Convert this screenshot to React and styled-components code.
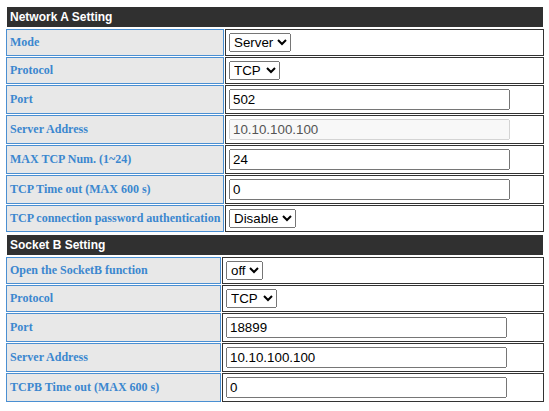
import styled, { createGlobalStyle } from 'styled-components';

const GlobalStyle = createGlobalStyle`
  body {
    margin: 0;
    background: #fff;
  }
`

const networkA = [
  { label: 'Mode', type: 'select', value: 'Server', options: ['Server', 'Client'] },
  { label: 'Protocol', type: 'select', value: 'TCP', options: ['TCP', 'UDP'] },
  { label: 'Port', type: 'input', value: '502' },
  { label: 'Server Address', type: 'input', value: '10.10.100.100', disabled: true },
  { label: 'MAX TCP Num. (1~24)', type: 'input', value: '24' },
  { label: 'TCP Time out (MAX 600 s)', type: 'input', value: '0' },
  { label: 'TCP connection password authentication', type: 'select', value: 'Disable', options: ['Disable', 'Enable'] },
]

const socketB = [
  { label: 'Open the SocketB function', type: 'select', value: 'off', options: ['off', 'on'] },
  { label: 'Protocol', type: 'select', value: 'TCP', options: ['TCP', 'UDP'] },
  { label: 'Port', type: 'input', value: '18899' },
  { label: 'Server Address', type: 'input', value: '10.10.100.100' },
  { label: 'TCPB Time out (MAX 600 s)', type: 'input', value: '0' },
]

function Field({ row }) {
  if (row.type === 'select') {
    return (
      <Select defaultValue={row.value}>
        {row.options.map(o => <option key={o}>{o}</option>)}
      </Select>
    )
  }
  return <Input type="text" defaultValue={row.value} disabled={row.disabled} />
}

function Section({ title, rows, labelWidth }) {
  return (
    <Grid $label={labelWidth}>
      <Header>{title}</Header>
      {rows.map(row => [
        <Label key={row.label + 'l'}>{row.label}</Label>,
        <Value key={row.label + 'v'}><Field row={row} /></Value>
      ])}
    </Grid>
  )
}

export default function App() {
  return (
    <Page>
      <GlobalStyle />
      <Section title="Network A Setting" rows={networkA} labelWidth={218} />
      <Section title="Socket B Setting" rows={socketB} labelWidth={215} />
    </Page>
  )
}

const Page = styled.div`
  padding: 5px 0 0 5px;
`

const Grid = styled.div`
  display: grid;
  grid-template-columns: ${p => p.$label}px 1fr;
  gap: 1px;
  padding: 1px;
  width: 540px;
  box-sizing: border-box;
`

const Header = styled.div`
  grid-column: 1 / -1;
  height: 22px;
  box-sizing: border-box;
  border: 1px solid #fff;
  background: #303030;
  color: #fff;
  font: bold 12px "Liberation Sans", Arial, sans-serif;
  padding: 0 3px;
  display: flex;
  align-items: center;
`

const Label = styled.div`
  border: 1px solid #4a8fd2;
  background: #e8e8e8;
  color: #3b87cf;
  font: bold 12px "Liberation Serif", "Times New Roman", serif;
  padding: 0 3px;
  display: flex;
  align-items: center;
  white-space: nowrap;
`

const Value = styled.div`
  border: 1px solid #333;
  padding: 3px;
  display: flex;
  align-items: center;
`

const Select = styled.select`
  height: 19px;
  font: 13.333px "Liberation Sans", Arial, sans-serif;
  color: #000;
`

const Input = styled.input`
  width: 281px;
  height: 21px;
  box-sizing: border-box;
  margin: 0;
  font: 13.333px "Liberation Sans", Arial, sans-serif;
`
